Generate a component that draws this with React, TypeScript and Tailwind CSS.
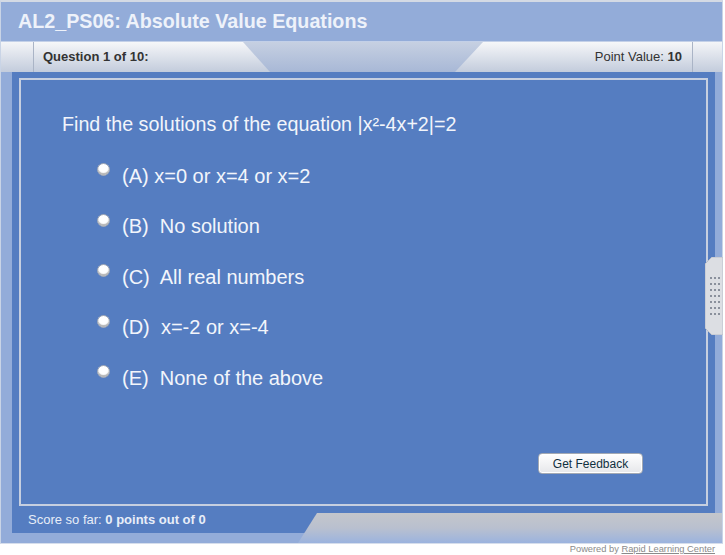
import React from "react";

const options = [
  "(A) x=0 or x=4 or x=2",
  "(B)  No solution",
  "(C)  All real numbers",
  "(D)  x=-2 or x=-4",
  "(E)  None of the above",
];

function Radio() {
  return (
    <span className="mb-[12px] block h-[13px] w-[13px] shrink-0 rounded-full bg-white shadow-[inset_0_-2px_1px_rgba(90,90,90,0.45)] border border-[#9aa3b3]" />
  );
}

function Handle() {
  const dots: React.ReactNode[] = [];
  for (let r = 0; r < 7; r++) {
    for (let c = 0; c < 3; c++) {
      dots.push(
        <rect key={`${r}-${c}`} x={5 + c * 4} y={20 + r * 6} width={2} height={2} fill="#8a909c" />
      );
    }
  }
  return (
    <svg width="18" height="78" viewBox="0 0 18 78">
      <polygon points="7,0 18,0 18,78 7,78 0,71 0,7" fill="#dcdee3" stroke="#b9bec8" strokeWidth="1" />
      {dots}
    </svg>
  );
}

export default function App() {
  return (
    <div className="w-[725px] h-[555px] bg-white font-['Liberation_Sans',Arial,sans-serif]">
      <div className="relative flex h-[544px] w-[723px] flex-col border-x border-t-2 border-b border-x-[#c9d4e6] border-t-[#d4dae4] border-b-[#d6deec] bg-[#93acd9]">
        {/* Title bar */}
        <div className="flex h-[39px] items-center pl-[17px] pt-[1px] text-[19.7px] font-bold text-[#eef2fa]">
          AL2_PS06: Absolute Value Equations
        </div>

        {/* Header tabs */}
        <div className="flex h-[31px] border-t border-[#c3d0e8] bg-gradient-to-b from-[#c6d0e2] to-[#a8b8d6] text-[13px] text-[#333]">
          <div className="w-[33px] bg-gradient-to-b from-[#f4f5f8] to-[#c3ccdc] border-r border-[#aab4c6]" />
          <div className="flex w-[236px] items-center bg-gradient-to-b from-[#f6f7f9] to-[#c3ccdc] pl-[9px] font-bold [clip-path:polygon(0_0,209px_0,236px_100%,0_100%)]">
            Question 1 of 10:
          </div>
          <div className="flex-1" />
          <div className="flex w-[237px] items-center justify-end bg-gradient-to-b from-[#f6f7f9] to-[#c3ccdc] pr-[10px] [clip-path:polygon(28px_0,100%_0,100%_100%,0_100%)]">
            Point Value:&nbsp;<span className="font-bold">10</span>
          </div>
          <div className="w-[30px] bg-gradient-to-b from-[#f4f5f8] to-[#c3ccdc] border-l border-[#aab4c6]" />
        </div>

        {/* Blue panel */}
        <div className="ml-[11px] mr-[7px] flex h-[461px] flex-col bg-[#557dc1] pt-[6px]">
          <div className="mx-[7px] flex h-[428px] flex-col border-2 border-[#c6cfe0] pl-[41px] pt-[20px] text-[#f2f5fb]">
            <div className="flex h-[50.5px] items-center text-[19.7px]">
              Find the solutions of the equation |x²-4x+2|=2
            </div>
            {options.map((o) => (
              <div key={o} className="ml-[35px] flex h-[50.5px] items-center gap-[12px] text-[20px]">
                <Radio />
                <span className="whitespace-pre">{o}</span>
              </div>
            ))}
            <div className="mt-[50px] flex justify-end pr-[63px]">
              <button className="flex h-[21px] w-[105px] items-center justify-center rounded-[4px] border border-[#a3a9b3] bg-gradient-to-b from-white to-[#e6e7ea] text-[12px] text-[#10303e] shadow-[inset_0_0_0_1px_#ffffff]">
                Get Feedback
              </button>
            </div>
          </div>
          <div className="flex h-[27px] items-center pl-[16px] pt-[1px] text-[13px] text-[#e8eef8]">
            Score so far:&nbsp;<span className="font-bold">0 points out of 0</span>
          </div>
        </div>

        {/* bottom gray decorative shape */}
        <div className="absolute left-[297px] right-0 top-[511px] h-[30px] bg-gradient-to-b from-[#c4c6cb] via-[#b9c0cf] to-[#9bb3de] [clip-path:polygon(19px_0,100%_0,100%_100%,0_100%)]" />

        {/* side handle */}
        <div className="absolute right-[-1px] top-[255px]">
          <Handle />
        </div>
      </div>
      <div className="flex h-[11px] items-center justify-end pr-[10px] text-[9.3px] leading-none text-[#8a8a8a]">
        Powered by&nbsp;<span className="underline">Rapid Learning Center</span>
      </div>
    </div>
  );
}
